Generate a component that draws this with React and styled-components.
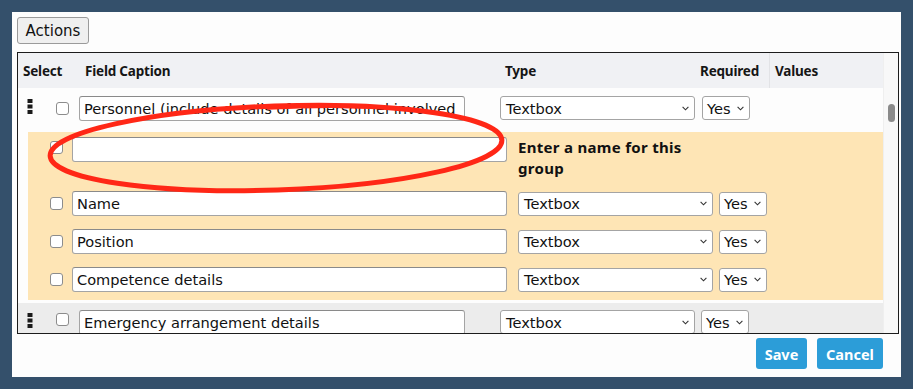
import React from "react";
import styled, { createGlobalStyle } from "styled-components";

const GlobalStyle = createGlobalStyle`
  html, body {
    margin: 0;
    padding: 0;
    background: #34506b;
  }
  body {
    font-family: "DejaVu Sans", sans-serif;
    color: #111;
  }
`;

const Page = styled.div`
  position: relative;
  width: 913px;
  height: 389px;
  box-sizing: border-box;
  padding: 12px 12px 12px 12px;
  background: #34506b;
`;

const Dialog = styled.div`
  width: 889px;
  height: 365px;
  box-sizing: border-box;
  padding: 5px 2px 8px 5px;
  background: #fdfdfd;
  display: flex;
  flex-direction: column;
`;

const ActionsButton = styled.button`
  align-self: flex-start;
  width: 72px;
  height: 27px;
  padding: 0;
  margin: 0 0 8px 0;
  background: #efefef;
  border: 1px solid #9a9a9a;
  border-radius: 3px;
  font-family: "DejaVu Sans", sans-serif;
  font-size: 15px;
  color: #111;
`;

const TableFrame = styled.div`
  height: 282px;
  box-sizing: border-box;
  border: 1px solid #1c1c1c;
  display: flex;
  overflow: hidden;
`;

const TableBody = styled.div`
  flex: 1;
  display: flex;
  flex-direction: column;
`;

const HeaderRow = styled.div`
  height: 35px;
  flex-shrink: 0;
  display: grid;
  grid-template-columns: 67px 420px 195px 70px 1fr;
  align-items: stretch;
  background: #f0f1f4;
`;

const HeaderCell = styled.div`
  display: flex;
  align-items: center;
  padding-left: ${(p) => (p.$pad ? "5px" : "0")};
  font-family: "Noto Sans", sans-serif;
  font-weight: 700;
  font-size: 13.5px;
  letter-spacing: -0.2px;
  color: #161616;
  border-right: ${(p) => (p.$divider ? "1px solid #e2e3e6" : "none")};
`;

const FieldRow = styled.div`
  height: 40px;
  flex-shrink: 0;
  box-sizing: border-box;
  display: flex;
  align-items: ${(p) => (p.$grey ? "flex-start" : "center")};
  padding: ${(p) => (p.$grey ? "7px 0 0 9px" : "0 0 0 9px")};
  background: ${(p) => (p.$grey ? "#ececec" : "#fdfdfd")};
`;

const Handle = styled.svg`
  width: 6px;
  height: 15px;
  flex-shrink: 0;
  margin-right: 23px;
  margin-top: ${(p) => (p.$top ? "3px" : "-4px")};
`;

const Checkbox = styled.span`
  width: 13px;
  height: 13px;
  flex-shrink: 0;
  box-sizing: border-box;
  border: 1px solid #8c8c8c;
  border-radius: 3px;
  background: #fff;
  margin-right: ${(p) => p.$gap || 10}px;
  margin-top: ${(p) => p.$top || 0}px;
`;

const TextInput = styled.input`
  width: ${(p) => p.$w}px;
  height: 25px;
  flex-shrink: 0;
  box-sizing: border-box;
  margin: 0;
  padding: 0 4px;
  border: 1px solid #a4a4a4;
  border-top-color: #8a8a8a;
  border-radius: 3px;
  background: #fff;
  font-family: "DejaVu Sans", sans-serif;
  font-size: 14.6px;
  color: #111;
  outline: none;
`;

const SelectBox = styled.div`
  width: ${(p) => p.$w}px;
  height: 24px;
  flex-shrink: 0;
  box-sizing: border-box;
  margin-left: ${(p) => p.$gap}px;
  padding: 0 5px 0 ${(p) => (p.$small ? 4 : 5)}px;
  display: flex;
  align-items: center;
  justify-content: space-between;
  border: 1px solid #a4a4a4;
  border-radius: 3px;
  background: #fff;
  font-family: "DejaVu Sans", sans-serif;
  font-size: 14.6px;
  color: #111;
`;

const GroupWrap = styled.div`
  flex-shrink: 0;
  padding: 4px 0 3px 10px;
  background: #fdfdfd;
`;

const GroupPanel = styled.div`
  background: #fee5b5;
  padding: 5px 0 8px 22px;
  display: flex;
  flex-direction: column;
  gap: 13px;
`;

const GroupRow = styled.div`
  display: flex;
  align-items: ${(p) => (p.$top ? "flex-start" : "center")};
`;

const HintText = styled.div`
  width: 200px;
  margin-left: 11px;
  font-family: "Noto Sans", sans-serif;
  font-weight: 700;
  font-size: 15px;
  letter-spacing: 0.3px;
  line-height: 20.5px;
  color: #111;
`;

const ScrollTrack = styled.div`
  width: 15px;
  flex-shrink: 0;
  background: #f8f8f8;
  border-left: 1px solid #efefef;
  padding-top: 51px;
  box-sizing: border-box;
  display: flex;
  justify-content: center;
`;

const ScrollThumb = styled.div`
  width: 7px;
  height: 18px;
  border-radius: 4px;
  background: #8a8a8a;
`;

const Footer = styled.div`
  display: flex;
  justify-content: flex-end;
  gap: 10px;
  margin-top: 4px;
  padding-right: 16px;
`;

const PrimaryButton = styled.button`
  width: ${(p) => p.$w}px;
  height: 31px;
  padding: 0;
  border: none;
  border-radius: 3px;
  background: #2c9dd8;
  color: #fff;
  font-family: "Noto Sans", sans-serif;
  font-weight: 700;
  font-size: 14.5px;
`;

const Annotation = styled.svg`
  position: absolute;
  left: 0;
  top: 0;
  width: 913px;
  height: 389px;
  pointer-events: none;
`;

function Chevron() {
  return (
    <svg width="7" height="5" viewBox="0 0 7 5">
      <path d="M0.6 0.8 L3.5 3.8 L6.4 0.8" fill="none" stroke="#333" strokeWidth="1.1" />
    </svg>
  );
}

function DragDots({ top }) {
  return (
    <Handle viewBox="0 0 6 15" $top={top}>
      <rect x="0.5" y="0" width="5" height="4" fill="#1a1a1a" />
      <rect x="0.5" y="5.5" width="5" height="4" fill="#1a1a1a" />
      <rect x="0.5" y="11" width="5" height="4" fill="#1a1a1a" />
    </Handle>
  );
}

function Select({ value, w, gap, small }) {
  return (
    <SelectBox $w={w} $gap={gap} $small={small}>
      <span>{value}</span>
      <Chevron />
    </SelectBox>
  );
}

const groupFields = ["Name", "Position", "Competence details"];

export default function App() {
  return (
    <Page>
      <GlobalStyle />
      <Dialog>
        <ActionsButton>Actions</ActionsButton>
        <TableFrame>
          <TableBody>
            <HeaderRow>
              <HeaderCell $pad>Select</HeaderCell>
              <HeaderCell>Field Caption</HeaderCell>
              <HeaderCell>Type</HeaderCell>
              <HeaderCell $divider>Required</HeaderCell>
              <HeaderCell $pad>Values</HeaderCell>
            </HeaderRow>

            <FieldRow>
              <DragDots />
              <Checkbox />
              <TextInput $w={386} readOnly defaultValue="Personnel (include details of all personnel involved in the task)" />
              <Select value="Textbox" w={195} gap={35} />
              <Select value="Yes" w={48} gap={7} small />
            </FieldRow>

            <GroupWrap>
              <GroupPanel>
                <GroupRow $top>
                  <Checkbox $gap={9} $top={4} />
                  <TextInput $w={435} readOnly defaultValue="" />
                  <HintText>Enter a name for this group</HintText>
                </GroupRow>
                {groupFields.map((f) => (
                  <GroupRow key={f}>
                    <Checkbox $gap={9} />
                    <TextInput $w={435} readOnly defaultValue={f} />
                    <Select value="Textbox" w={195} gap={11} />
                    <Select value="Yes" w={48} gap={6} small />
                  </GroupRow>
                ))}
              </GroupPanel>
            </GroupWrap>

            <FieldRow $grey>
              <DragDots top />
              <Checkbox $top={3} />
              <TextInput $w={386} readOnly defaultValue="Emergency arrangement details" />
              <Select value="Textbox" w={195} gap={35} />
              <Select value="Yes" w={48} gap={6} small />
            </FieldRow>
          </TableBody>
          <ScrollTrack>
            <ScrollThumb />
          </ScrollTrack>
        </TableFrame>
        <Footer>
          <PrimaryButton $w={51}>Save</PrimaryButton>
          <PrimaryButton $w={66}>Cancel</PrimaryButton>
        </Footer>
      </Dialog>

      <Annotation viewBox="0 0 913 389">
        <ellipse
          cx="276"
          cy="148"
          rx="226"
          ry="42"
          transform="rotate(-2 276 148)"
          fill="none"
          stroke="#ff2716"
          strokeWidth="5"
        />
        <path
          d="M268 108 C 320 105, 370 106, 410 109"
          fill="none"
          stroke="#ff2716"
          strokeWidth="3.5"
          strokeLinecap="round"
        />
      </Annotation>
    </Page>
  );
}
